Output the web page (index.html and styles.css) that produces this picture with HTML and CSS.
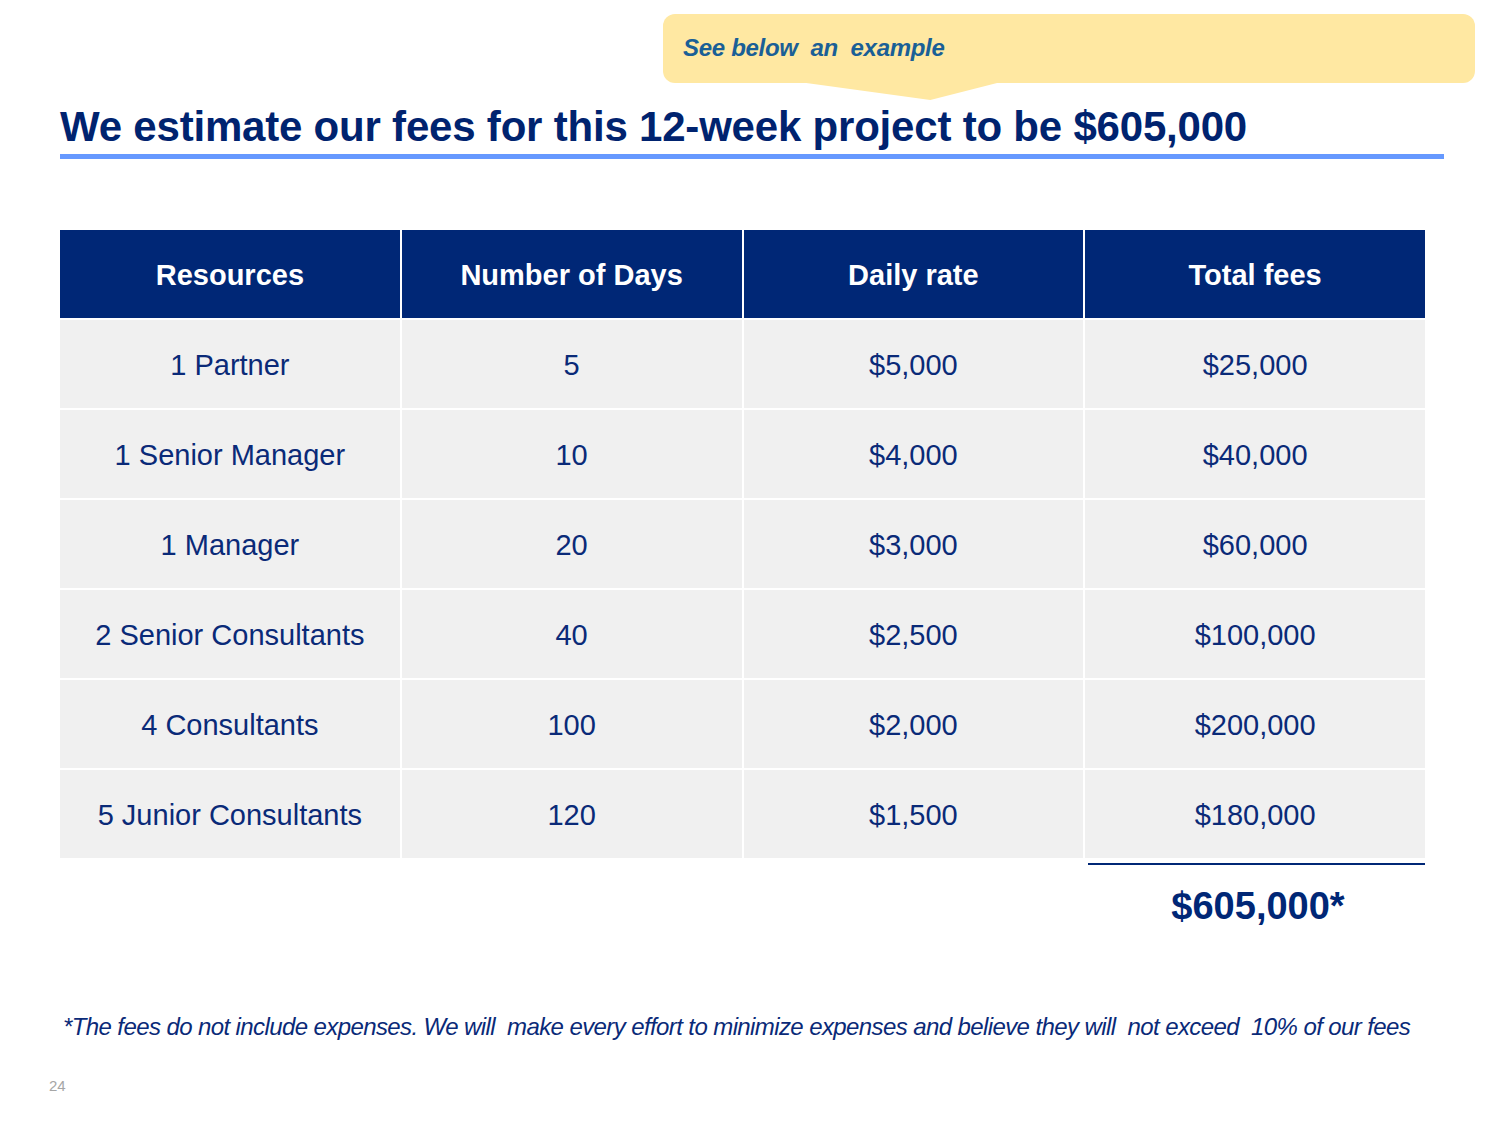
FILE: index.html
```html
<!DOCTYPE html>
<html lang="en">
<head>
<meta charset="utf-8">
<title>Fees estimate</title>
<link rel="stylesheet" href="styles.css">
</head>
<body>
<div class="slide">
  <div class="callout"><span class="callout-text">See below&nbsp; an&nbsp; example</span></div>
  <h1 class="title">We estimate our fees for this 12-week project to be $605,000</h1>
  <div class="fees">
    <div class="th">Resources</div>
    <div class="th">Number of Days</div>
    <div class="th">Daily rate</div>
    <div class="th">Total fees</div>

    <div class="td">1 Partner</div><div class="td">5</div><div class="td">$5,000</div><div class="td">$25,000</div>
    <div class="td">1 Senior Manager</div><div class="td">10</div><div class="td">$4,000</div><div class="td">$40,000</div>
    <div class="td">1 Manager</div><div class="td">20</div><div class="td">$3,000</div><div class="td">$60,000</div>
    <div class="td">2 Senior Consultants</div><div class="td">40</div><div class="td">$2,500</div><div class="td">$100,000</div>
    <div class="td">4 Consultants</div><div class="td">100</div><div class="td">$2,000</div><div class="td">$200,000</div>
    <div class="td">5 Junior Consultants</div><div class="td">120</div><div class="td">$1,500</div><div class="td">$180,000</div>
  </div>
  <div class="total-row">
    <div class="total">$605,000*</div>
  </div>
  <p class="footnote">*The fees do not include expenses. We will&nbsp; make every effort to minimize expenses and believe they will&nbsp; not exceed&nbsp; 10% of our fees</p>
  <div class="page-num">24</div>
</div>
</body>
</html>
```

FILE: styles.css
```css
* { box-sizing: border-box; }
html, body { margin: 0; padding: 0; background: #ffffff; }
body { font-family: "Liberation Sans", Arial, sans-serif; }

.slide {
  width: 1500px;
  height: 1125px;
  position: relative;
  background: #ffffff;
  padding-top: 14px;
  overflow: hidden;
}

.callout {
  position: relative;
  margin-left: 663px;
  width: 812px;
  height: 69px;
  background: #ffe8a2;
  border-radius: 12px;
  display: flex;
  align-items: center;
  padding-left: 20px;
}
.callout::after {
  content: "";
  position: absolute;
  left: 136px;
  top: 68px;
  width: 202px;
  height: 18px;
  background: #ffe8a2;
  clip-path: polygon(0 0, 100% 0, 65% 100%);
}
.callout-text {
  font-weight: bold;
  font-style: italic;
  font-size: 24px;
  color: #1a5f96;
  letter-spacing: -0.3px;
  margin-top: -1px;
}

.title {
  margin: 20px 0 0 60px;
  width: 1384px;
  font-size: 42px;
  font-weight: bold;
  color: #00236f;
  line-height: 48px;
  padding-bottom: 3px;
  border-bottom: 5px solid #6699ff;
  letter-spacing: -0.2px;
}

.fees {
  margin: 71px 0 0 60px;
  width: 1365px;
  display: grid;
  grid-template-columns: repeat(4, 1fr);
  grid-template-rows: 88px repeat(6, 88px);
  gap: 2px;
}
.th {
  background: #002776;
  color: #ffffff;
  font-weight: bold;
  font-size: 29px;
  display: flex;
  align-items: center;
  justify-content: center;
  padding-top: 2px;
}
.td {
  background: #f0f0f0;
  color: #0a2a78;
  font-size: 29px;
  display: flex;
  align-items: center;
  justify-content: center;
  padding-top: 2px;
}

.total-row {
  margin-left: 1088px;
  margin-top: 5px;
  width: 337px;
  border-top: 2px solid #002776;
  display: flex;
  justify-content: center;
  padding-top: 20px;
}
.total {
  font-size: 38px;
  font-weight: bold;
  color: #002776;
  margin-left: 3px;
}

.footnote {
  margin: 85px 0 0 63px;
  font-style: italic;
  font-size: 24px;
  color: #0a2a78;
  white-space: nowrap;
  letter-spacing: -0.6px;
}

.page-num {
  position: absolute;
  left: 49px;
  top: 1077px;
  font-size: 15px;
  color: #a6a6a6;
}
```
